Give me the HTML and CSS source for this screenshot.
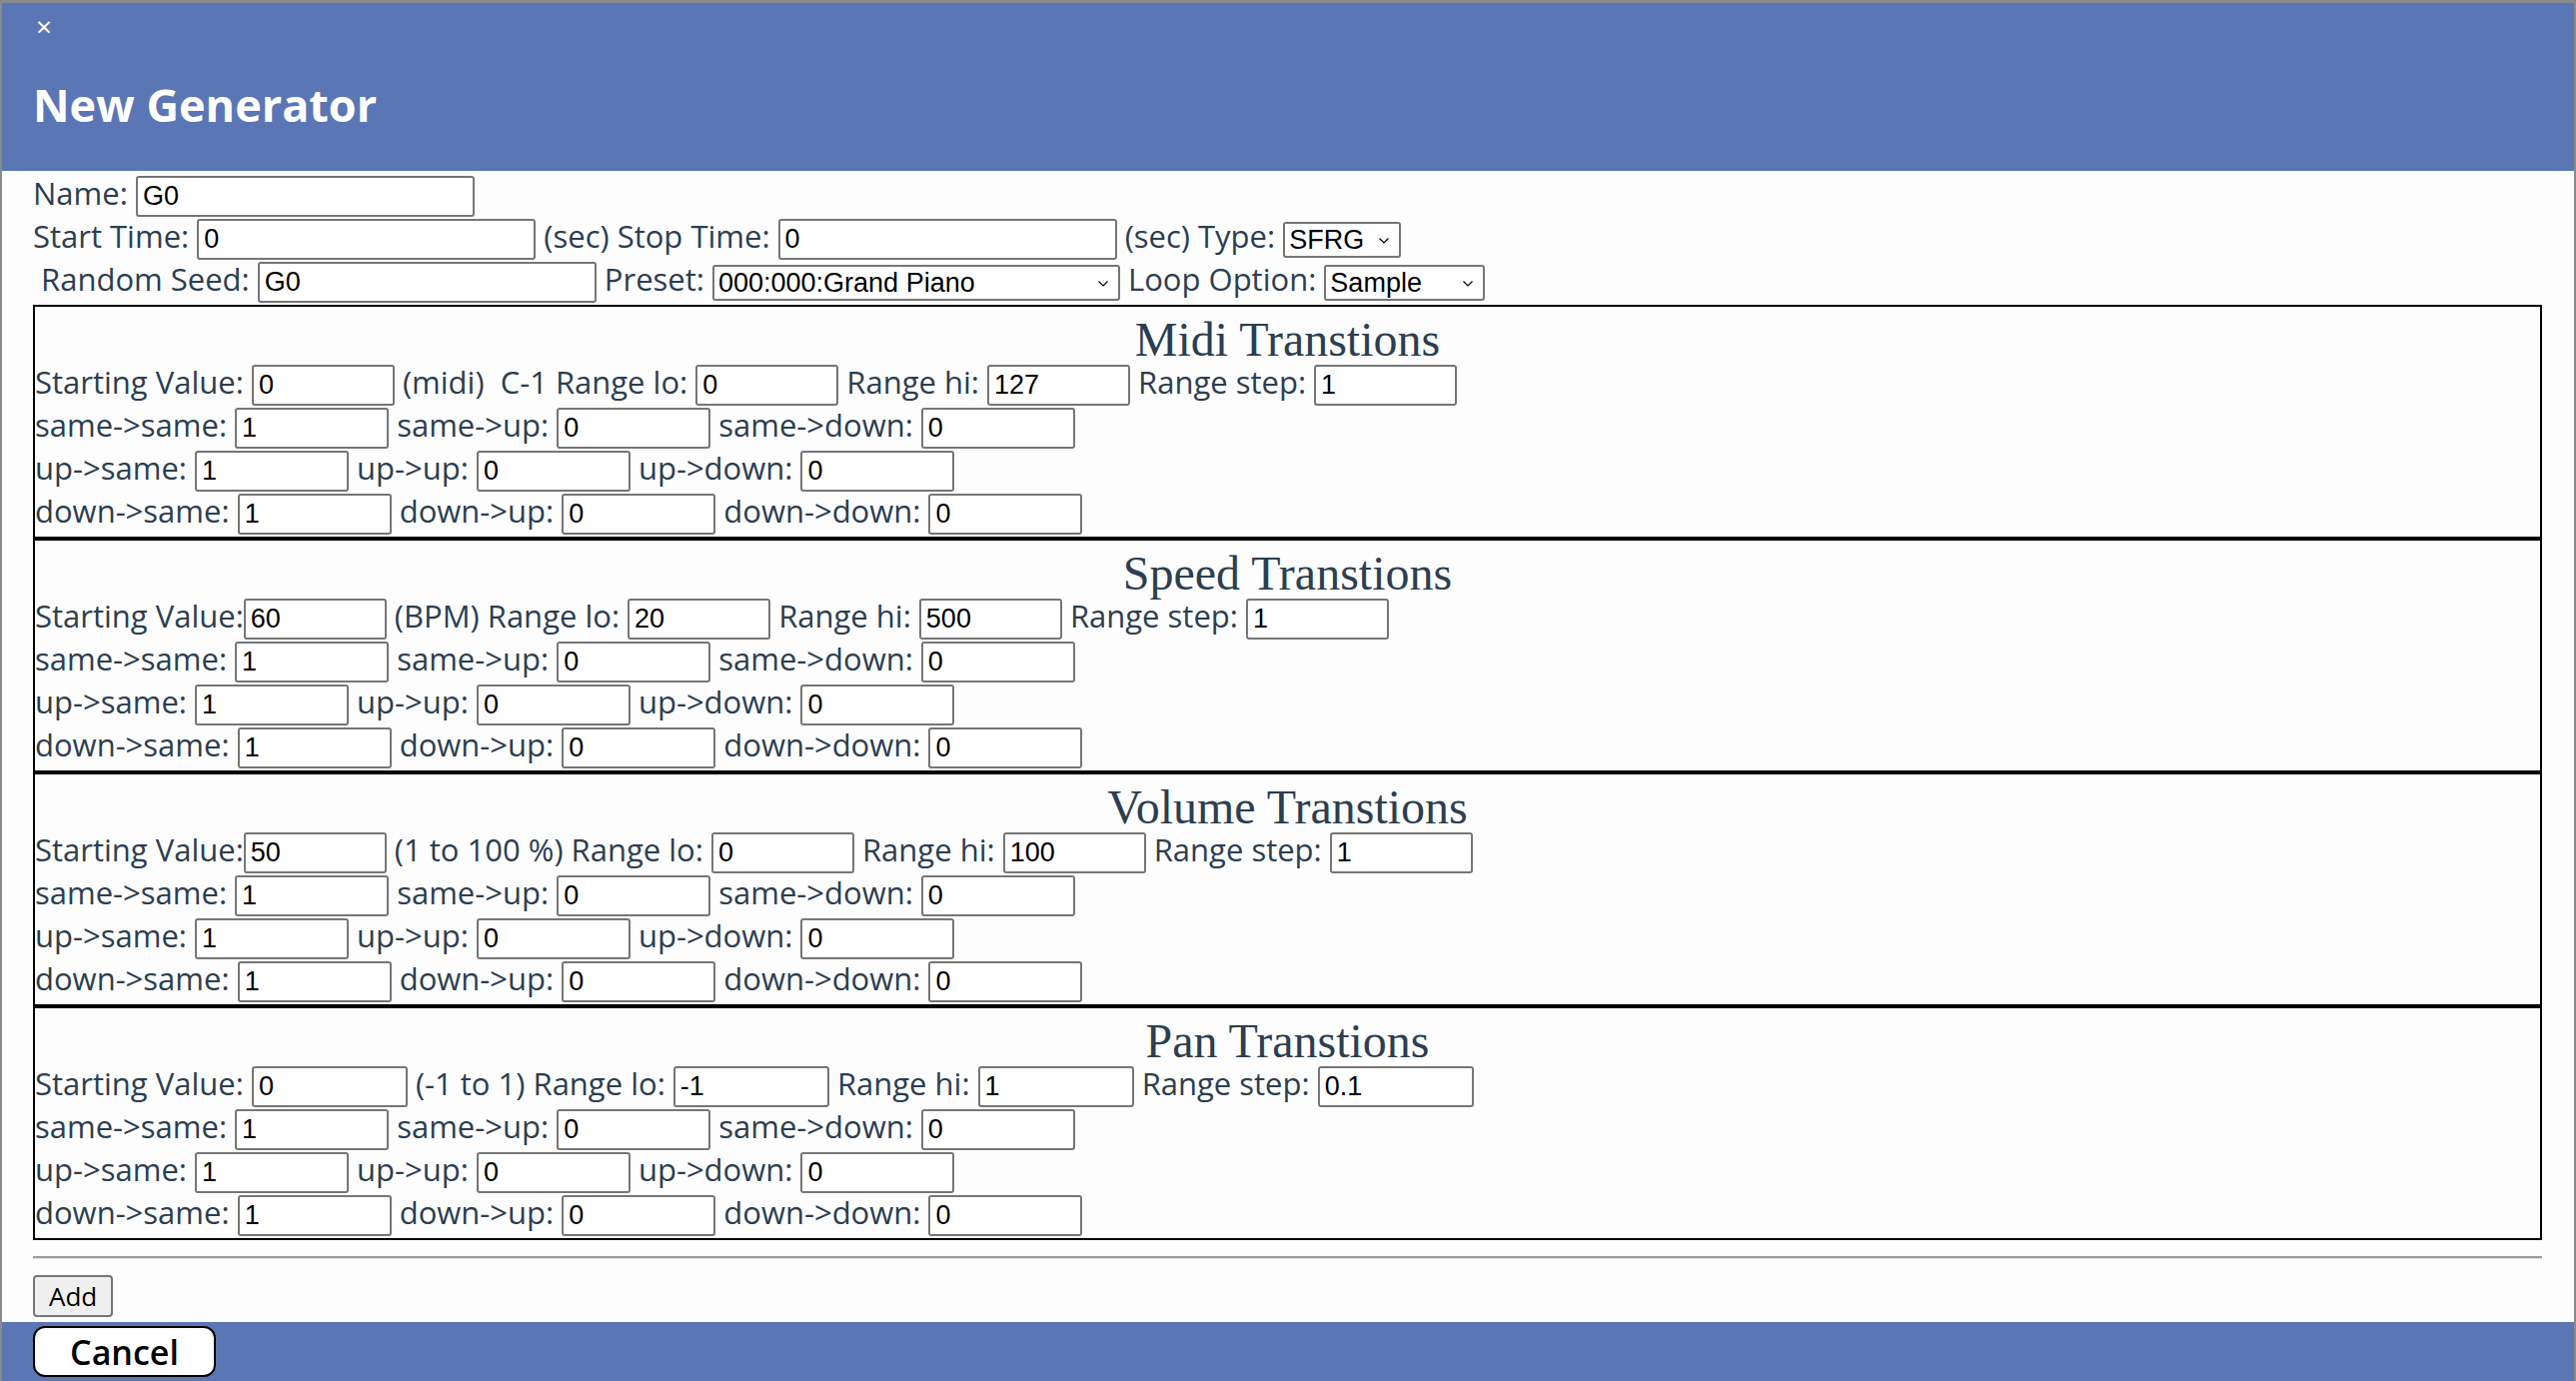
FILE: index.html
```html
<!DOCTYPE html>
<html lang="en">
<head>
<meta charset="utf-8">
<title>New Generator</title>
<link rel="stylesheet" href="styles.css">
</head>
<body>
<div class="modal">
  <div class="modal-header">
    <span class="close">×</span>
    <h1 class="title">New Generator</h1>
  </div>
  <div class="modal-body">
    <div class="row">Name: <input class="w-long" value="G0"></div>
    <div class="row">Start Time: <input class="w-long" value="0"> (sec) Stop Time: <input class="w-long" value="0"> (sec) Type: <span class="select w-type"><select><option>SFRG</option></select><svg class="chev" viewBox="0 0 10 6"><path d="M0.5 0.5 L5 5 L9.5 0.5"/></svg></span></div>
    <div class="row">&nbsp;Random Seed: <input class="w-long" value="G0"> Preset: <span class="select w-preset"><select><option>000:000:Grand Piano</option></select><svg class="chev" viewBox="0 0 10 6"><path d="M0.5 0.5 L5 5 L9.5 0.5"/></svg></span> Loop Option: <span class="select w-loop"><select><option>Sample</option></select><svg class="chev" viewBox="0 0 10 6"><path d="M0.5 0.5 L5 5 L9.5 0.5"/></svg></span></div>

    <div class="sections">
      <section class="trans">
        <h2 class="trans-title">Midi Transtions</h2>
        <div class="row">Starting Value: <input class="w-start" value="0"> (midi)&nbsp; C-1 Range lo: <input class="w-start" value="0"> Range hi: <input class="w-start" value="127"> Range step: <input class="w-start" value="1"></div>
        <div class="row">same-&gt;same: <input class="w-tr" value="1"> same-&gt;up: <input class="w-tr" value="0"> same-&gt;down: <input class="w-tr" value="0"></div>
        <div class="row">up-&gt;same: <input class="w-tr" value="1"> up-&gt;up: <input class="w-tr" value="0"> up-&gt;down: <input class="w-tr" value="0"></div>
        <div class="row">down-&gt;same: <input class="w-tr" value="1"> down-&gt;up: <input class="w-tr" value="0"> down-&gt;down: <input class="w-tr" value="0"></div>
      </section>
      <section class="trans">
        <h2 class="trans-title">Speed Transtions</h2>
        <div class="row">Starting Value:<input class="w-start" value="60"> (BPM) Range lo: <input class="w-start" value="20"> Range hi: <input class="w-start" value="500"> Range step: <input class="w-start" value="1"></div>
        <div class="row">same-&gt;same: <input class="w-tr" value="1"> same-&gt;up: <input class="w-tr" value="0"> same-&gt;down: <input class="w-tr" value="0"></div>
        <div class="row">up-&gt;same: <input class="w-tr" value="1"> up-&gt;up: <input class="w-tr" value="0"> up-&gt;down: <input class="w-tr" value="0"></div>
        <div class="row">down-&gt;same: <input class="w-tr" value="1"> down-&gt;up: <input class="w-tr" value="0"> down-&gt;down: <input class="w-tr" value="0"></div>
      </section>
      <section class="trans">
        <h2 class="trans-title">Volume Transtions</h2>
        <div class="row">Starting Value:<input class="w-start" value="50"> (1 to 100 %) Range lo: <input class="w-start" value="0"> Range hi: <input class="w-start" value="100"> Range step: <input class="w-start" value="1"></div>
        <div class="row">same-&gt;same: <input class="w-tr" value="1"> same-&gt;up: <input class="w-tr" value="0"> same-&gt;down: <input class="w-tr" value="0"></div>
        <div class="row">up-&gt;same: <input class="w-tr" value="1"> up-&gt;up: <input class="w-tr" value="0"> up-&gt;down: <input class="w-tr" value="0"></div>
        <div class="row">down-&gt;same: <input class="w-tr" value="1"> down-&gt;up: <input class="w-tr" value="0"> down-&gt;down: <input class="w-tr" value="0"></div>
      </section>
      <section class="trans">
        <h2 class="trans-title">Pan Transtions</h2>
        <div class="row">Starting Value: <input class="w-pan" value="0"> (-1 to 1) Range lo: <input class="w-pan" value="-1"> Range hi: <input class="w-pan" value="1"> Range step: <input class="w-pan" value="0.1"></div>
        <div class="row">same-&gt;same: <input class="w-tr" value="1"> same-&gt;up: <input class="w-tr" value="0"> same-&gt;down: <input class="w-tr" value="0"></div>
        <div class="row">up-&gt;same: <input class="w-tr" value="1"> up-&gt;up: <input class="w-tr" value="0"> up-&gt;down: <input class="w-tr" value="0"></div>
        <div class="row">down-&gt;same: <input class="w-tr" value="1"> down-&gt;up: <input class="w-tr" value="0"> down-&gt;down: <input class="w-tr" value="0"></div>
      </section>
    </div>

    <hr class="divider">
    <button class="btn-add" type="button">Add</button>
  </div>
  <div class="modal-footer">
    <button class="btn-cancel" type="button">Cancel</button>
  </div>
</div>
</body>
</html>
```

FILE: styles.css
```css
html, body {
  margin: 0;
  padding: 0;
  overflow: hidden;
  background: #fdfdfd;
}

body {
  font-family: "Open Sans", "Noto Sans", sans-serif;
  font-size: 31px;
  color: #2c3e50;
}

.modal {
  border: 2px solid #8a8a8a;
  border-top-width: 3px;
  border-bottom: 0;
  background: #fdfdfd;
}

.modal-header {
  height: 168px;
  box-sizing: border-box;
  background: #5b76b4;
  color: #fff;
  padding: 0 31px;
}

.close {
  display: block;
  font-size: 28px;
  line-height: 28px;
  height: 28px;
  padding-top: 9px;
  padding-left: 3px;
}

.title {
  margin: 37px 0 0;
  font-size: 45px;
  font-weight: 700;
  line-height: 56px;
}

.modal-body {
  padding: 5px 32px 5px 31px;
}

.row {
  height: 43px;
  line-height: 33px;
  white-space: nowrap;
}

input {
  box-sizing: border-box;
  height: 41px;
  font-family: "Liberation Sans", Arial, sans-serif;
  font-size: 27px;
  color: #000;
  background: #fff;
  border: 2px solid #767676;
  border-radius: 3px;
  padding: 0 5px;
  margin: 0;
  vertical-align: baseline;
}

.w-long { width: 339px; }
.w-start { width: 143px; }
.w-tr { width: 154px; }
.w-pan { width: 156px; }

.select {
  position: relative;
  display: inline-block;
  vertical-align: top;
  margin-top: 2px;
  height: 36px;
}

.select select {
  appearance: none;
  -webkit-appearance: none;
  box-sizing: border-box;
  width: 100%;
  height: 36px;
  font-family: "Liberation Sans", Arial, sans-serif;
  font-size: 27px;
  color: #000;
  background: #fff;
  border: 2px solid #767676;
  border-radius: 3px;
  padding: 0 4px;
  margin: 0;
}

.chev {
  position: absolute;
  right: 12px;
  top: 17px;
  width: 10px;
  height: 6px;
  fill: none;
  stroke: #000;
  stroke-width: 1.2;
}

.w-type { width: 118px; }
.w-preset { width: 408px; }
.w-loop { width: 161px; }

.trans {
  border: 2px solid #000;
}

.trans-title {
  margin: 0;
  height: 58px;
  box-sizing: border-box;
  padding-top: 7px;
  font-family: "Liberation Serif", "Times New Roman", serif;
  font-size: 48px;
  font-weight: 400;
  line-height: 52px;
  text-align: center;
  color: #2c3e50;
}

.divider {
  margin: 16px 0 16px;
  height: 0;
  border: 0;
  border-top: 2px solid #9a9a9a;
  border-bottom: 1px solid #e4e4e4;
}

.btn-add {
  display: block;
  height: 42px;
  box-sizing: border-box;
  padding: 0 14px;
  font-family: "Open Sans", sans-serif;
  font-size: 26px;
  color: #000;
  background: #efefef;
  border: 2px solid #767676;
  border-radius: 4px;
}

.modal-footer {
  background: #5b76b4;
  height: 60px;
  padding: 4px 31px 0;
  box-sizing: border-box;
}

.btn-cancel {
  display: block;
  width: 183px;
  height: 51px;
  box-sizing: border-box;
  font-family: "Open Sans", sans-serif;
  font-size: 34px;
  font-weight: 600;
  color: #000;
  background: #fff;
  border: 2px solid #000;
  border-radius: 12px;
  padding: 0;
}
```
